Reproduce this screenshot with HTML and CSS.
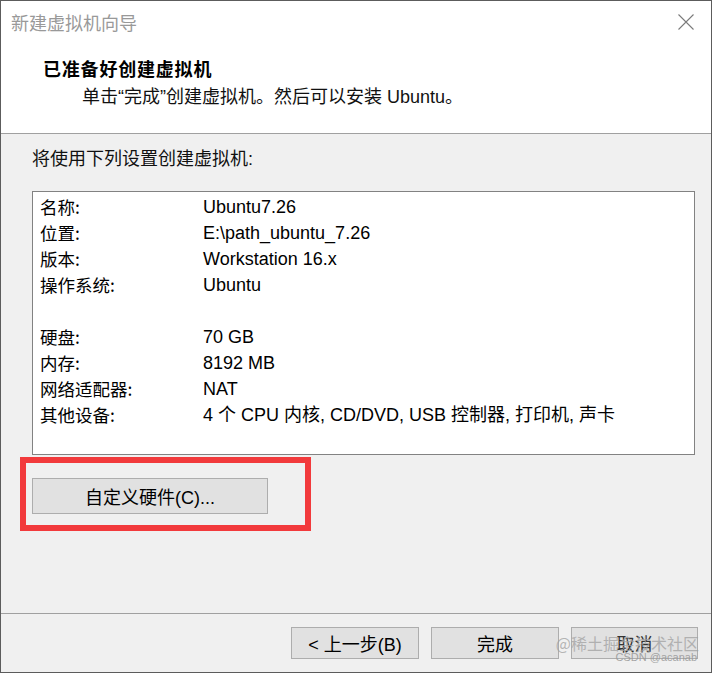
FILE: index.html
```html
<!DOCTYPE html>
<html lang="zh-CN">
<head>
<meta charset="utf-8">
<title>新建虚拟机向导</title>
<link rel="stylesheet" href="styles.css">
</head>
<body>
<div class="window">
  <div class="titlebar">
    <span class="title">新建虚拟机向导</span>
    <svg class="close" width="16" height="16" viewBox="0 0 16 16"><path d="M0.5 0.5 L15.5 15.5 M15.5 0.5 L0.5 15.5" stroke="#7a7a7a" stroke-width="1.1" fill="none"/></svg>
  </div>
  <div class="header">
    <div class="h-title">已准备好创建虚拟机</div>
    <div class="h-sub">单击“完成”创建虚拟机。然后可以安装 Ubuntu。</div>
  </div>
  <div class="content">
    <div class="intro">将使用下列设置创建虚拟机:</div>
    <div class="summary">
      <div class="row"><span class="k">名称:</span><span class="v">Ubuntu7.26</span></div>
      <div class="row"><span class="k">位置:</span><span class="v">E:\path_ubuntu_7.26</span></div>
      <div class="row"><span class="k">版本:</span><span class="v">Workstation 16.x</span></div>
      <div class="row"><span class="k">操作系统:</span><span class="v">Ubuntu</span></div>
      <div class="row"></div>
      <div class="row"><span class="k">硬盘:</span><span class="v">70 GB</span></div>
      <div class="row"><span class="k">内存:</span><span class="v">8192 MB</span></div>
      <div class="row"><span class="k">网络适配器:</span><span class="v">NAT</span></div>
      <div class="row"><span class="k">其他设备:</span><span class="v">4 个 CPU 内核, CD/DVD, USB 控制器, 打印机, 声卡</span></div>
    </div>
    <div class="highlight">
      <button class="btn btn-custom">自定义硬件(C)...</button>
    </div>
  </div>
  <div class="footer">
    <button class="btn btn-foot">&lt; 上一步(B)</button>
    <button class="btn btn-foot">完成</button>
    <button class="btn btn-foot btn-cancel">取消
      <span class="wm1">@稀土掘金技术社区</span>
      <span class="wm2">CSDN @acanab</span>
    </button>
  </div>
</div>
</body>
</html>
```
FILE: styles.css
```css
html, body {
  margin: 0;
  padding: 0;
  background: #ffffff;
}
body {
  width: 712px;
  height: 673px;
  overflow: hidden;
  font-family: "Liberation Sans", "Noto Sans CJK SC", sans-serif;
  color: #000;
}
.window {
  box-sizing: border-box;
  width: 712px;
  height: 673px;
  border: 1px solid #5c5c5c;
  display: flex;
  flex-direction: column;
  background: #f0f0f0;
}
.titlebar {
  height: 43px;
  flex: none;
  background: #fff;
  display: flex;
  align-items: center;
  justify-content: space-between;
  padding: 0 17px 0 10px;
}
.title {
  font-family: "Noto Sans CJK SC", sans-serif;
  font-size: 18px;
  line-height: 43px;
  color: #999999;
}
.close {
  display: block;
  margin-top: -2px;
}
.header {
  box-sizing: border-box;
  height: 90px;
  flex: none;
  background: #fff;
  border-bottom: 1px solid #a0a0a0;
  padding: 12px 0 0 42px;
}
.h-title {
  font-family: "Noto Sans CJK SC", sans-serif;
  font-weight: 700;
  font-size: 18px;
  letter-spacing: 0.8px;
  line-height: 24px;
}
.h-sub {
  margin-top: 5px;
  padding-left: 39px;
  font-family: "Liberation Sans", "Noto Sans CJK SC", sans-serif;
  font-size: 18px;
  line-height: 24px;
  color: #111;
}
.content {
  box-sizing: border-box;
  height: 480px;
  flex: none;
  padding: 13px 0 0 0;
  border-bottom: 1px solid #a0a0a0;
}
.intro {
  padding-left: 31px;
  font-size: 18px;
  line-height: 24px;
  color: #111;
}
.summary {
  box-sizing: border-box;
  margin: 20px 0 0 31px;
  width: 663px;
  height: 264px;
  background: #fff;
  border: 1px solid #828282;
  padding: 2px 0 0 7px;
}
.row {
  display: flex;
  height: 26px;
  line-height: 26px;
  font-size: 18px;
}
.k {
  width: 163px;
  flex: none;
  font-family: "Noto Sans CJK SC", sans-serif;
  font-size: 17.5px;
}
.v {
  font-size: 18px;
  white-space: nowrap;
}
.highlight {
  box-sizing: border-box;
  margin: 2px 0 0 19px;
  width: 291px;
  height: 74px;
  border: 6px solid #f23a3c;
  padding: 15px 0 0 6px;
}
.btn {
  box-sizing: border-box;
  background: #e1e1e1;
  border: 1px solid #adadad;
  font-family: "Liberation Sans", "Noto Sans CJK SC", sans-serif;
  font-size: 18px;
  color: #000;
  padding: 0;
  margin: 0;
}
.btn-custom {
  display: block;
  width: 236px;
  height: 36px;
}
.footer {
  box-sizing: border-box;
  flex: 1;
  display: flex;
  justify-content: flex-end;
  align-items: flex-start;
  gap: 12px;
  padding: 13px 13px 0 0;
}
.btn-foot {
  width: 128px;
  height: 32px;
}
.btn-cancel {
  width: 127px;
  position: relative;
  color: #333;
}
.wm1 {
  position: absolute;
  right: -2px;
  top: 5px;
  font-family: "Noto Sans CJK SC", sans-serif;
  font-size: 16px;
  line-height: 20px;
  white-space: nowrap;
  color: rgba(160, 160, 160, 0.75);
}
.wm2 {
  position: absolute;
  right: 0px;
  top: 23px;
  font-family: "Liberation Sans", sans-serif;
  font-size: 11px;
  line-height: 13px;
  white-space: nowrap;
  color: rgba(150, 150, 150, 0.85);
}
```
